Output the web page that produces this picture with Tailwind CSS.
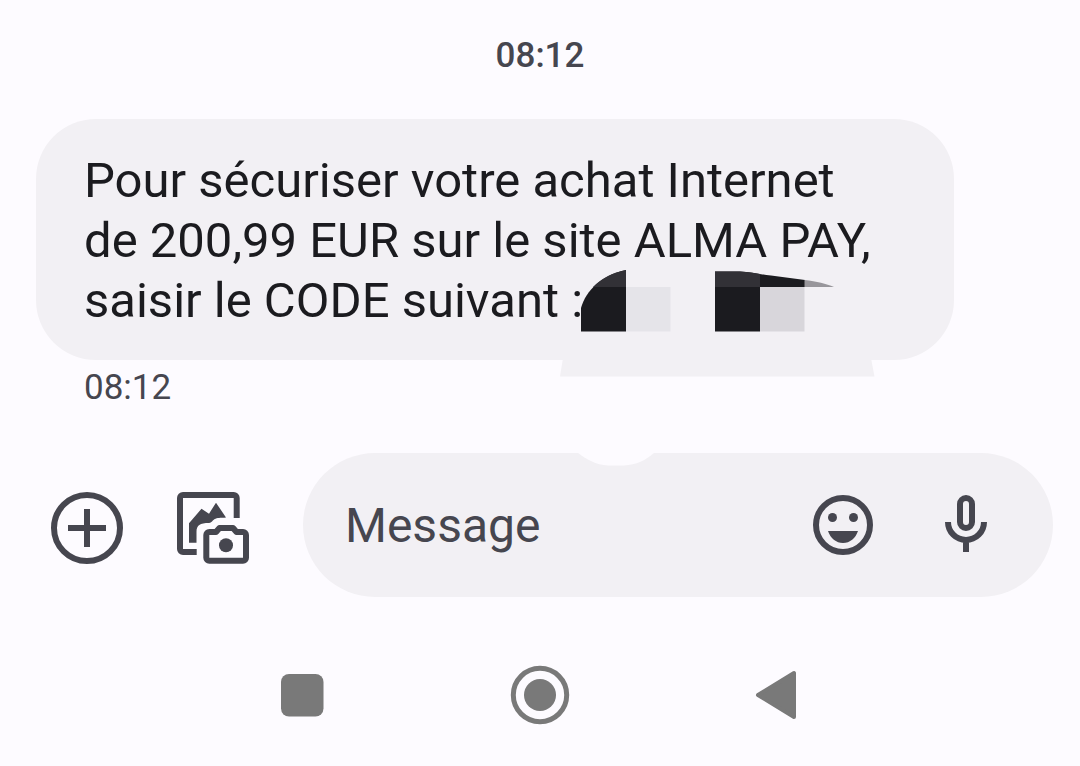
<!DOCTYPE html>
<html lang="fr">
<head>
  <meta charset="UTF-8" />
  <meta name="viewport" content="width=device-width, initial-scale=1.0"/>
  <title>Messages</title>
  <script src="https://cdn.jsdelivr.net/npm/@tailwindcss/browser@4"></script>
</head>
<body class="bg-[#fdfbff] font-['Roboto',sans-serif] text-[#46464f]">
  <main class="flex flex-col pt-8">
    <time class="text-center text-[35px] leading-[48px] font-medium">08:12</time>

    <section class="mt-[39px] px-9">
      <div class="relative mr-[90px] rounded-[60px] bg-[#f2f0f4] px-12 pt-8 pb-[29px] text-[#1b1b1f]">
        <p class="text-[49px] leading-[60px] whitespace-nowrap">Pour sécuriser votre achat Internet<br>de 200,99 EUR sur le site ALMA PAY,<br>saisir le CODE suivant :</p>
        <!-- masked code -->
        <svg class="absolute top-[150px] left-[524px] w-[320px] h-[108px]" viewBox="560 269 320 108" aria-hidden="true">
          <path d="M563 358L560 376.500H874.500L871 358z" fill="#f2f0f4" />
          <path d="M581 331.500V308C586 290 602 275 626 270V331.500z" fill="#1b1b1f" />
          <path d="M593 287C602 278 612 273 626 270V287z" fill="#323136" />
          <path d="M626 287h44.500v44.500H626z" fill="#e5e4e9" />
          <path d="M715 271.500H740C752 272 760 274.500 771 275.500L805 280V287H760V331.500H715z" fill="#1b1b1f" />
          <path d="M715 271.500H740C748 271.800 754 273 760 274V287H715z" fill="#323136" />
          <path d="M760 287h44.500v44.500H760z" fill="#d8d6db" />
          <path d="M804.500 280C817 281.500 826 283.500 834 287H804.500z" fill="#98969b" />
        </svg>
      </div>
      <time class="mt-1 block pl-12 text-[35px] leading-[48px]">08:12</time>
    </section>

    <form class="mt-[41px] flex items-center pr-[27px] pl-[51px]">
      <div class="flex shrink-0 gap-[54px] pt-[6px]">
        <button type="button" aria-label="Ajouter">
          <svg class="h-[72px] w-[72px]" viewBox="0 0 72 72" fill="none" stroke="currentColor" stroke-width="6">
            <circle cx="36" cy="36" r="33" />
            <path d="M36 17v38M17 36h38" />
          </svg>
        </button>
        <button type="button" aria-label="Galerie">
          <svg class="h-[72px] w-[73px]" viewBox="0 0 73 72" fill="none" stroke="currentColor" stroke-width="6">
            <path d="M59.700 26V6a3 3 0 0 0-3-3H6a3 3 0 0 0-3 3v51a3 3 0 0 0 3 3h13.700" />
            <path d="M12 50.700V31.300L24.500 16.700L32 21.700L39 10.700L49 25.500C44 26 42 25.500 38.500 26.700C35 28 35.500 30.500 32 31C23 31 19.500 33 19.500 40V50.700z" fill="currentColor" stroke="none" />
            <path d="M32.300 40H39L42.500 36H56L59.500 40H66a3 3 0 0 1 3 3v22.700a3 3 0 0 1-3 3H32.300a3 3 0 0 1-3-3V43a3 3 0 0 1 3-3z" stroke-linejoin="round" />
            <circle cx="49" cy="53.300" r="7" fill="currentColor" stroke="none" />
          </svg>
        </button>
      </div>
      <div class="relative ml-[53px] flex h-36 min-w-0 grow items-center rounded-full bg-[#f2f0f4] pr-[51px] pl-[42px]">
        <svg class="absolute top-0 left-[275px] h-[13px] w-20" viewBox="0 0 80 13" aria-hidden="true">
          <path d="M0 0C8 6 18 12 30 12.500H46C58 12 68 7 76 0z" fill="#fdfbff" />
        </svg>
        <input type="text" aria-label="Message" placeholder="Message" class="min-w-0 grow pt-[2px] text-[48px] leading-[60px] placeholder:text-[#46464f] placeholder:opacity-100 focus:outline-none" />
        <button type="button" aria-label="Emoji" class="shrink-0">
          <svg class="size-[72px]" viewBox="0 0 24 24" fill="currentColor">
            <circle cx="12" cy="12" r="9" fill="none" stroke="currentColor" stroke-width="2" />
            <circle cx="8.500" cy="9.500" r="1.500" />
            <circle cx="15.500" cy="9.500" r="1.500" />
            <path d="M7 14c.8 2.400 2.700 4 5 4s4.200-1.600 5-4z" />
          </svg>
        </button>
        <button type="button" aria-label="Micro" class="ml-[51px] shrink-0">
          <svg class="size-[72px]" viewBox="0 0 24 24" fill="none" stroke="currentColor" stroke-width="2">
            <rect x="10" y="3" width="4" height="10" rx="2" />
            <path d="M6 11a6 6 0 0 0 12 0M12 17v4" />
          </svg>
        </button>
      </div>
    </form>

    <nav class="mt-[68px] flex justify-center text-[#797979]">
      <button type="button" aria-label="Applications récentes" class="flex w-[22%] justify-center">
        <svg class="size-[60px]" viewBox="0 0 60 60" fill="currentColor">
          <rect x="9" y="9" width="42.500" height="42.500" rx="8" />
        </svg>
      </button>
      <button type="button" aria-label="Accueil" class="flex w-[22%] justify-center">
        <svg class="size-[60px]" viewBox="0 0 60 60" fill="currentColor">
          <circle cx="30" cy="30" r="26.700" fill="none" stroke="currentColor" stroke-width="5" />
          <circle cx="30" cy="30" r="16" />
        </svg>
      </button>
      <button type="button" aria-label="Retour" class="flex w-[22%] justify-center">
        <svg class="size-[60px]" viewBox="0 0 60 60" fill="currentColor" stroke="currentColor" stroke-width="4" stroke-linejoin="round">
          <path d="M10 30L46 8V52z" />
        </svg>
      </button>
    </nav>
  </main>
</body>
</html>
